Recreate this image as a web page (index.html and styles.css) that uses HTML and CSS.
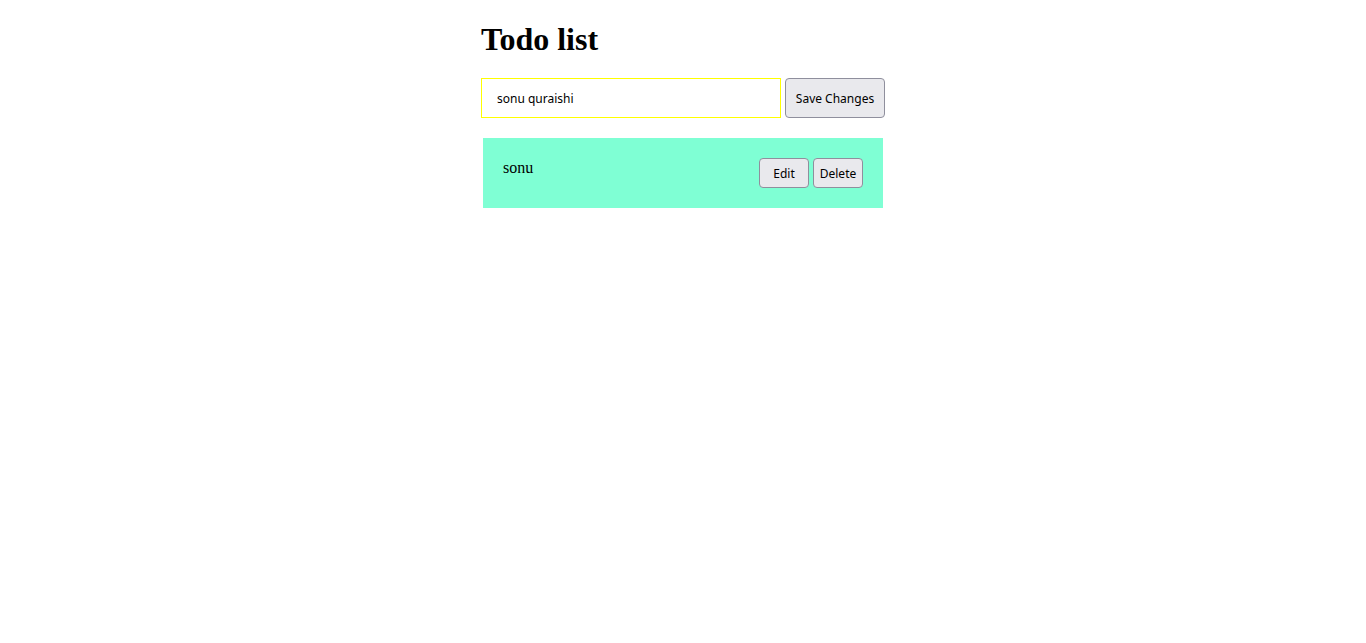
FILE: index.html
```html
<!DOCTYPE html>
<html lang="en">
<head>
<meta charset="utf-8">
<title>Todo list</title>
<link rel="stylesheet" href="styles.css">
</head>
<body>
<main class="app">
  <h1 class="title">Todo list</h1>
  <form class="entry">
    <input class="entry-input" type="text" value="sonu quraishi" aria-label="Todo">
    <button class="btn btn-save" type="button">Save Changes</button>
  </form>
  <ul class="list">
    <li class="item">
      <span class="item-text">sonu</span>
      <div class="actions">
        <button class="btn btn-small" type="button">Edit</button>
        <button class="btn btn-small" type="button">Delete</button>
      </div>
    </li>
  </ul>
</main>
</body>
</html>
```
FILE: styles.css
```css
* { box-sizing: border-box; }
body {
  margin: 0;
  background: #fff;
  color: #000;
  font-family: "Liberation Serif", serif;
  font-size: 16px;
}
.app {
  width: 100%;
  max-width: 404px;
  margin: 0 auto;
  padding-top: 21px;
}
.title {
  margin: 0 0 20px;
  font-size: 32px;
  line-height: 37px;
}
.entry {
  display: flex;
  gap: 4px;
}
.entry-input {
  flex: 1;
  min-width: 0;
  height: 40px;
  padding: 0 15px;
  border: 1px solid #ff0;
  font: 12px "Noto Sans", sans-serif;
}
.btn {
  padding: 0;
  border: 1px solid #8f8f9d;
  border-radius: 4px;
  background: #e9e9ed;
  color: #000;
  font: 12px "Noto Sans", sans-serif;
}
.btn-save {
  width: 100px;
  height: 40px;
}
.list {
  margin: 20px 2px 0;
  padding: 0;
  list-style: none;
}
.item {
  display: flex;
  justify-content: space-between;
  padding: 20px;
  background: aquamarine;
}
.item-text { line-height: 20px; }
.actions {
  display: flex;
  gap: 4px;
}
.btn-small {
  width: 50px;
  height: 30px;
}
```
